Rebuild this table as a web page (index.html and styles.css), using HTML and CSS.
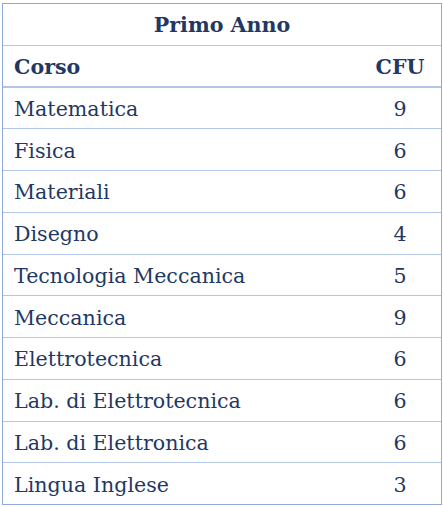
FILE: index.html
```html
<!DOCTYPE html>
<html lang="it">
<head>
<meta charset="utf-8">
<link rel="stylesheet" href="styles.css">
</head>
<body>
<div class="table">
  <div class="row title"><span>Primo Anno</span></div>
  <div class="row head"><span class="name">Corso</span><span class="cfu">CFU</span></div>
  <div class="row"><span class="name">Matematica</span><span class="cfu">9</span></div>
  <div class="row"><span class="name">Fisica</span><span class="cfu">6</span></div>
  <div class="row"><span class="name">Materiali</span><span class="cfu">6</span></div>
  <div class="row"><span class="name">Disegno</span><span class="cfu">4</span></div>
  <div class="row"><span class="name">Tecnologia Meccanica</span><span class="cfu">5</span></div>
  <div class="row"><span class="name">Meccanica</span><span class="cfu">9</span></div>
  <div class="row"><span class="name">Elettrotecnica</span><span class="cfu">6</span></div>
  <div class="row"><span class="name">Lab. di Elettrotecnica</span><span class="cfu">6</span></div>
  <div class="row"><span class="name">Lab. di Elettronica</span><span class="cfu">6</span></div>
  <div class="row"><span class="name">Lingua Inglese</span><span class="cfu">3</span></div>
</div>
</body>
</html>
```
FILE: styles.css
```css
html, body {
  margin: 0;
  padding: 0;
  background: #ffffff;
}
body {
  padding: 3px 0 0 2px;
  font-family: "DejaVu Serif", serif;
  font-size: 20.6px;
  color: #1f3864;
}
.table {
  width: 440px;
  border: 1px solid #8eaadb;
  border-bottom: none;
  box-sizing: border-box;
}
.row {
  display: flex;
  align-items: center;
  height: 41.75px;
  box-sizing: border-box;
  border-bottom: 1px solid #b4c6e7;
  padding-left: 11px;
  padding-top: 2px;
}
.row.title {
  justify-content: center;
  font-weight: bold;
  padding-left: 0;
}
.row.head {
  font-weight: bold;
  border-bottom: 2px solid #b4c6e7;
}
.row:last-child {
  border-bottom-color: #8eaadb;
}
.name {
  flex: 1;
}
.cfu {
  width: 82px;
  text-align: center;
}
```
